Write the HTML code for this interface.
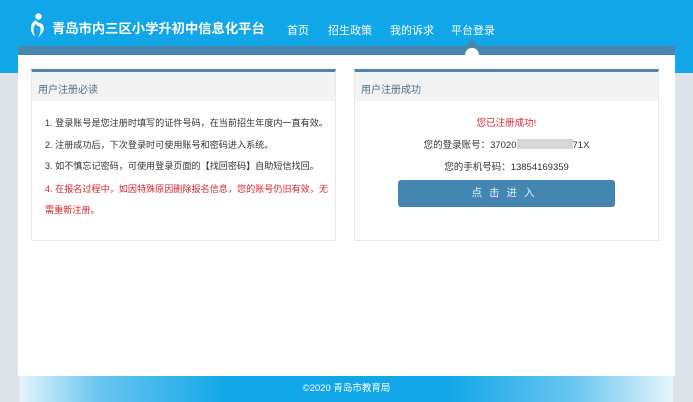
<!DOCTYPE html>
<html><head><meta charset="utf-8"><style>
*{margin:0;padding:0;box-sizing:border-box}
body{width:693px;height:402px;overflow:hidden;background:#dde4e9;font-family:"Liberation Sans","Noto Sans CJK SC",sans-serif;position:relative}
.hdr{position:absolute;left:0;top:0;width:693px;height:73px;background:#10a6e8}
.band{position:absolute;left:18px;top:46px;width:657px;height:9px;background:#4a87ae}
.main{position:absolute;left:18px;top:55px;width:657px;height:321px;background:#fff}
.title{position:absolute;left:52px;top:18px;color:#fff;font-size:13.3px;font-weight:bold}
.nav{position:absolute;top:22px;color:#fff;font-size:11px}
.tri{position:absolute;left:465px;top:39px;width:0;height:0;border-left:7px solid transparent;border-right:7px solid transparent;border-bottom:7px solid #4a87ae}
.semi{position:absolute;left:465px;top:48px;width:14px;height:14px;border-radius:50%;background:#fff}
.panel{position:absolute;top:69px;height:172px;background:#fff;border:1px solid #e6e8ea;border-top:3px solid #4a87ae}
.ph{height:29px;background:#f3f3f3;font-size:10px;color:#4a6f8a;padding:9px 0 0 6px}
.l{position:absolute;left:13px;font-size:9.1px;color:#333;white-space:nowrap}
.c{position:absolute;left:0;width:100%;text-align:center;font-size:9.5px;color:#333}
.red{color:#d9262a}
.c.red{color:#d9262a}
.btn{position:absolute;left:43px;top:108px;width:217px;height:27px;background:#4486b2;border-radius:3px;color:#e8f2f8;font-size:10.5px;text-align:center;line-height:27px;letter-spacing:7px}
.foot{position:absolute;left:20px;top:376px;width:653px;height:26px;background:linear-gradient(90deg,#e3f4fc 0%,#6ac6f0 12%,#10a6e8 32%,#10a6e8 65%,#6ac6f0 85%,#e6f5fc 100%);color:#fff;font-size:9.5px;text-align:center;line-height:26px}
</style></head><body>
<div class="hdr"></div>
<svg style="position:absolute;left:30px;top:13px" width="16" height="25" viewBox="0 0 16 25">
<circle cx="8.5" cy="3.5" r="3.2" fill="#fff"/>
<path d="M5.5 7 C-0.5 11 -0.5 19 5 23.5 C2.5 17 3 12 8 9.5 Z" fill="#fff"/>
<path d="M6.5 9.5 C15 9.5 17 17 8 24.5 C12 17 11.5 13 6.5 12.5 Z" fill="#fff"/>
</svg>
<div class="title">青岛市内三区小学升初中信息化平台</div>
<div class="nav" style="left:287px">首页</div>
<div class="nav" style="left:328px">招生政策</div>
<div class="nav" style="left:390px">我的诉求</div>
<div class="nav" style="left:451px">平台登录</div>
<div class="band"></div>
<div class="tri"></div>
<div class="main"></div>
<div class="semi"></div>
<div class="panel" style="left:31px;width:305px">
<div class="ph">用户注册必读</div>
<div class="l" style="top:43px">1. 登录账号是您注册时填写的证件号码，在当前招生年度内一直有效。</div>
<div class="l" style="top:65px">2. 注册成功后，下次登录时可使用账号和密码进入系统。</div>
<div class="l" style="top:86px">3. 如不慎忘记密码，可使用登录页面的【找回密码】自助短信找回。</div>
<div class="l red" style="top:109px">4. 在报名过程中，如因特殊原因删除报名信息，您的账号仍旧有效，无</div>
<div class="l red" style="top:130px">需重新注册。</div>
</div>
<div class="panel" style="left:354px;width:305px">
<div class="ph">用户注册成功</div>
<div class="c red" style="top:43px">您已注册成功!</div>
<div class="c" style="top:65px">您的登录账号：37020<span style="display:inline-block;width:56px;height:10px;background:#d6d6d6;vertical-align:-1px"></span>71X</div>
<div class="c" style="top:87px">您的手机号码：13854169359</div>
<div class="btn">点击进入</div>
</div>
<div class="foot">©2020 青岛市教育局</div>
</body></html>
